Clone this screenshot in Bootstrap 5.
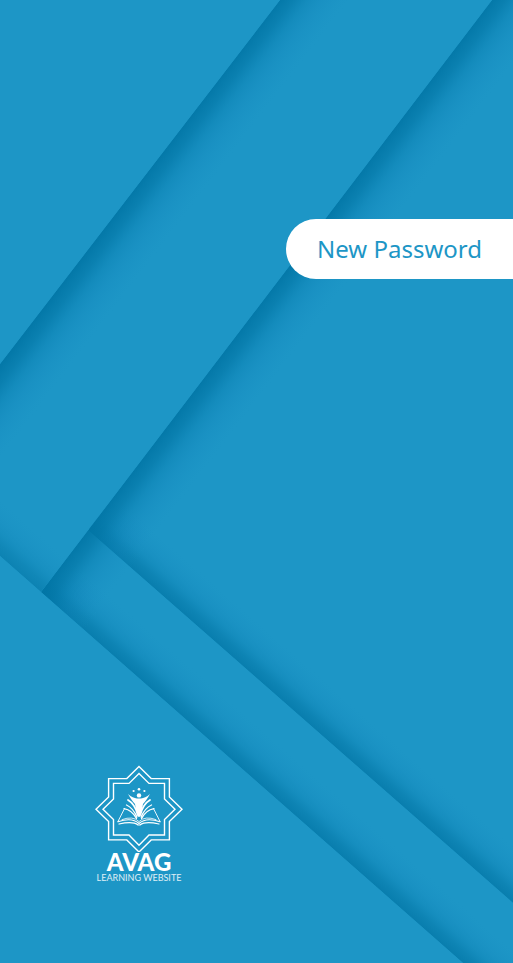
<!DOCTYPE html>
<html lang="en">
<head>
<meta charset="utf-8">
<meta name="viewport" content="width=device-width, initial-scale=1">
<title>New Password</title>
<link rel="stylesheet" href="https://cdn.jsdelivr.net/npm/bootstrap@5.3.0/dist/css/bootstrap.min.css">
<style>
  body { background: #1d96c6; font-family: "Noto Sans", sans-serif; }
  .page-title { color: #1d96c6; height: 60px; margin-top: 219px; padding: 0 31px; border-radius: 30px 0 0 30px; font-size: 24px; font-weight: 400; line-height: 60px; }
  .brand { margin: 0 0 79px 95px; width: 88px; }
  .brand-name { font: 900 24px/20px Lato, sans-serif; }
  .brand-tagline { font: 400 9px/12px Lato, sans-serif; opacity: .85; }
</style>
<script src="https://cdn.jsdelivr.net/npm/bootstrap@5.3.0/dist/js/bootstrap.bundle.min.js" defer></script>
</head>
<body>
<main class="position-relative min-vh-100 d-flex flex-column justify-content-between overflow-hidden">
  <!-- Folded paper layers -->
  <svg class="position-absolute top-0 start-0 w-100 h-100" viewBox="0 0 513 963" preserveAspectRatio="xMidYMid slice" aria-hidden="true">
    <defs>
      <linearGradient id="shade">
        <stop offset="0" stop-color="#0074a4" stop-opacity=".88"/>
        <stop offset=".2" stop-color="#0074a4" stop-opacity=".64"/>
        <stop offset=".4" stop-color="#0277aa" stop-opacity=".34"/>
        <stop offset=".6" stop-color="#0c7fb6" stop-opacity=".22"/>
        <stop offset=".8" stop-color="#1288be" stop-opacity=".12"/>
        <stop offset="1" stop-color="#1d96c6" stop-opacity="0"/>
      </linearGradient>
      <linearGradient id="shadeA" href="#shade" gradientUnits="userSpaceOnUse" x1="140" y1="182" x2="186" y2="217"/>
      <linearGradient id="shadeB" href="#shade" gradientUnits="userSpaceOnUse" x1="266" y1="296" x2="312" y2="331"/>
      <linearGradient id="shadeC" href="#shade" gradientUnits="userSpaceOnUse" x1="300" y1="716" x2="329" y2="683"/>
      <linearGradient id="shadeD" href="#shade" gradientUnits="userSpaceOnUse" x1="231" y1="759" x2="260" y2="726"/>
    </defs>
    <path fill="#1d96c6" d="M0 0h513v963H0z"/>
    <path fill="url(#shadeC)" opacity=".82" d="M89 531L513 903V0H89z"/>
    <path fill="#1d96c6" d="M89 531L513 903V963H0V600z"/>
    <path fill="url(#shadeD)" opacity=".82" d="M41 592L463 963H513V903L89 531z"/>
    <path fill="url(#shadeB)" d="M492 0H513V963H463L41 592z"/>
    <path fill="#1d96c6" d="M492 0L41 592L0 556V0z"/>
    <path fill="url(#shadeD)" opacity=".66" d="M0 556L41 592L200 383V300H0z"/>
    <path fill="url(#shadeA)" d="M280 0L0 364V556L41 592L492 0z"/>
    <path fill="#1d96c6" d="M0 0H280L0 364zM0 556L463 963H0z"/>
  </svg>

  <h1 class="page-title position-relative align-self-end bg-white mb-0 text-nowrap">New Password</h1>

  <div class="brand position-relative d-flex flex-column align-items-center text-white text-nowrap">
    <svg class="d-block w-100" viewBox="0 0 88 87" aria-hidden="true">
      <g fill="none" stroke="#fff" stroke-width="1.4">
        <path d="M44 1.4L56.2 13.6H74.4V31.9L87 44.2L74.4 56.5V74.9H56.2L44 87L31.8 74.9H13.6V56.5L1 44.2L13.6 31.9V13.6H31.8z"/>
        <path d="M44 8.4L54 18.4H69.5V34L80 44.2L69.5 54.5V70H54L44 80.2L34 70H18.5V54.5L8 44.2L18.5 34V18.4H34z"/>
      </g>
      <g fill="#fff">
        <circle cx="38.6" cy="26" r="1.1"/><circle cx="44" cy="24.2" r="1.3"/><circle cx="49.4" cy="26" r="1.1"/>
        <circle cx="44" cy="30.4" r="2.2"/>
        <path d="M33 29Q38 33.4 42 33.4H46Q50 33.4 55 29Q51 36 48 39L47 45L44.6 52H43.4L41 45L40 39Q37 36 33 29z"/>
      </g>
      <g fill="none" stroke="#fff" stroke-linecap="round" stroke-linejoin="round">
        <path stroke-width="1.8" d="M33 35Q40 39 42.8 50M55 35Q48 39 45.2 50"/>
        <path stroke-width="1.3" d="M31.5 40Q38 43 42 52M56.5 40Q50 43 46 52M29 43.6Q37 45 41.5 53.5M59 43.6Q51 45 46.5 53.5"/>
        <path stroke-width=".9" d="M29.5 43.6L23 56.4M58.5 43.6L65 56.4"/>
        <path stroke-width="1.2" d="M23 56.8Q37 52 44 58.5Q51 52 65 56.8M24 59Q38 56 43 60H45Q50 56 64 59"/>
        <path stroke-width=".8" d="M27 54.6Q38 50.5 44 56.6Q50 50.5 61 54.6"/>
      </g>
    </svg>
    <strong class="brand-name">AVAG</strong>
    <span class="brand-tagline">LEARNING WEBSITE</span>
  </div>
</main>
</body>
</html>
